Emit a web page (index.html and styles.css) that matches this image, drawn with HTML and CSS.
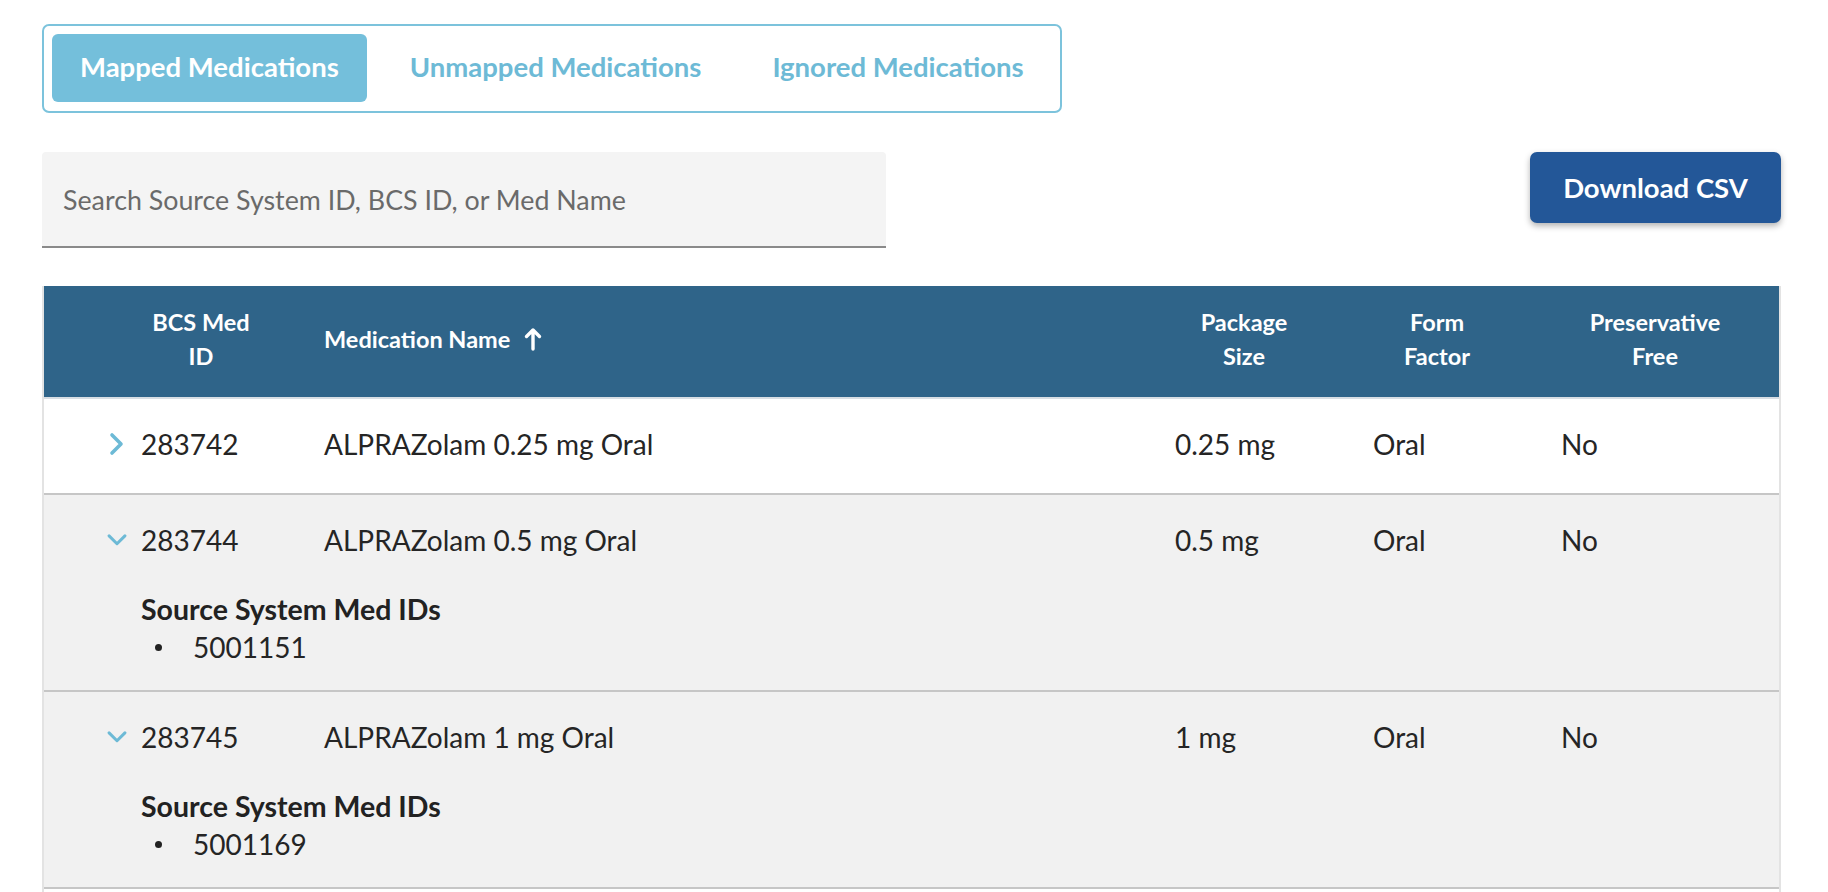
FILE: index.html
```html
<!DOCTYPE html>
<html lang="en">
<head>
<meta charset="utf-8">
<title>Mapped Medications</title>
<link rel="stylesheet" href="styles.css">
</head>
<body>
<div class="page">
  <nav class="tabs">
    <button class="tab active">Mapped Medications</button>
    <button class="tab">Unmapped Medications</button>
    <button class="tab">Ignored Medications</button>
  </nav>

  <div class="toolbar">
    <div class="search">Search Source System ID, BCS ID, or Med Name</div>
    <button class="download">Download CSV</button>
  </div>

  <div class="table">
    <div class="thead">
      <div class="th th-id">BCS Med<br>ID</div>
      <div class="th th-name">Medication Name
        <svg class="sort" width="18" height="24" viewBox="0 0 18 24"><path d="M9 22V3M2.5 9.5L9 3l6.5 6.5" fill="none" stroke="#fff" stroke-width="3.4" stroke-linecap="round" stroke-linejoin="round"/></svg>
      </div>
      <div class="th">Package<br>Size</div>
      <div class="th">Form<br>Factor</div>
      <div class="th">Preservative<br>Free</div>
    </div>

    <div class="row">
      <div class="td td-id"><span class="chev"><svg width="16" height="24" viewBox="0 0 16 24"><path d="M3 3l9 9-9 9" fill="none" stroke="#6dbad6" stroke-width="3.6" stroke-linecap="round" stroke-linejoin="round"/></svg></span>283742</div>
      <div class="td td-name">ALPRAZolam 0.25 mg Oral</div>
      <div class="td">0.25 mg</div>
      <div class="td">Oral</div>
      <div class="td">No</div>
    </div>

    <div class="row open">
      <div class="td td-id"><span class="chev"><svg width="24" height="16" viewBox="0 0 24 16"><path d="M2.5 3l9.5 9.5 9.5-9.5" fill="none" stroke="#6dbad6" stroke-width="3.6" stroke-linecap="round" stroke-linejoin="round"/></svg></span>283744</div>
      <div class="td td-name">ALPRAZolam 0.5 mg Oral</div>
      <div class="td">0.5 mg</div>
      <div class="td">Oral</div>
      <div class="td">No</div>
      <div class="details">
        <h4>Source System Med IDs</h4>
        <ul><li>5001151</li></ul>
      </div>
    </div>

    <div class="row open">
      <div class="td td-id"><span class="chev"><svg width="24" height="16" viewBox="0 0 24 16"><path d="M2.5 3l9.5 9.5 9.5-9.5" fill="none" stroke="#6dbad6" stroke-width="3.6" stroke-linecap="round" stroke-linejoin="round"/></svg></span>283745</div>
      <div class="td td-name">ALPRAZolam 1 mg Oral</div>
      <div class="td">1 mg</div>
      <div class="td">Oral</div>
      <div class="td">No</div>
      <div class="details">
        <h4>Source System Med IDs</h4>
        <ul><li>5001169</li></ul>
      </div>
    </div>

    <div class="row">
      <div class="td td-id"><span class="chev"><svg width="16" height="24" viewBox="0 0 16 24"><path d="M3 3l9 9-9 9" fill="none" stroke="#6dbad6" stroke-width="3.6" stroke-linecap="round" stroke-linejoin="round"/></svg></span>283746</div>
      <div class="td td-name">ALPRAZolam 2 mg Oral</div>
      <div class="td">2 mg</div>
      <div class="td">Oral</div>
      <div class="td">No</div>
    </div>
  </div>
</div>
</body>
</html>
```

FILE: styles.css
```css
* { box-sizing: border-box; }

html, body {
  margin: 0;
  padding: 0;
  background: #fff;
  overflow: hidden;
}

body {
  font-family: Lato, "Open Sans", "Liberation Sans", sans-serif;
  color: #252525;
}

.page {
  padding: 24px 47px 0 42px;
}

/* Tabs */
.tabs {
  display: inline-flex;
  gap: 15px;
  border: 2px solid #7cc3dc;
  border-radius: 7px;
  padding: 8px 8px 9px 8px;
}

.tab {
  height: 68px;
  padding: 0 28px 4px;
  border: 0;
  background: transparent;
  border-radius: 6px;
  font-family: inherit;
  font-size: 27.5px;
  font-weight: 700;
  color: #6dbad6;
  cursor: pointer;
}

.tab.active {
  background: #74bfdb;
  color: #fff;
}

/* Toolbar */
.toolbar {
  margin-top: 39px;
  display: flex;
  justify-content: space-between;
  align-items: flex-start;
}

.search {
  width: 844px;
  height: 96px;
  background: #f4f4f4;
  border-bottom: 2px solid #8a8a8a;
  border-radius: 4px 4px 0 0;
  padding: 2px 0 0 21px;
  display: flex;
  align-items: center;
  font-size: 26.8px;
  color: #6a6a6a;
}

.download {
  width: 251px;
  height: 71px;
  border: 0;
  border-radius: 7px;
  background: #235798;
  color: #fff;
  font-family: inherit;
  font-size: 27.5px;
  font-weight: 700;
  padding-bottom: 2px;
  box-shadow: 0 3px 6px rgba(0, 0, 0, 0.3);
}

/* Table */
.table {
  margin-top: 38px;
  border-left: 2px solid #e3e3e3;
  border-right: 2px solid #e3e3e3;
}

.thead,
.row {
  display: grid;
  grid-template-columns: 63px 188px 850px 198px 188px 1fr;
}

.thead {
  background: #2f6489;
  height: 113px;
  padding-bottom: 6px;
  border-bottom: 2px solid #d8dee4;
  align-items: center;
  color: #fff;
  font-size: 23.5px;
  font-weight: 700;
  line-height: 34px;
}

.th {
  text-align: center;
}

.th-id { grid-column: 2; }

.th-name {
  text-align: left;
  padding-left: 29px;
  display: flex;
  align-items: center;
  gap: 14px;
}

.sort { display: block; }

.row {
  border-bottom: 2px solid #c6c6c6;
  background: #fff;
  font-size: 28px;
  line-height: 32px;
}

.row.open {
  background: #f1f1f1;
}

.td {
  padding: 29px 0 33px 30px;
}

.td-id {
  grid-column: 2;
  padding-left: 0;
  display: flex;
  align-items: center;
}

.td-name { padding-left: 29px; }

.chev {
  width: 20px;
  margin-right: 14px;
  display: flex;
  justify-content: center;
  align-items: center;
}

.chev svg { display: block; }

.row.open .td {
  padding-bottom: 0;
}

.details {
  grid-column: 2 / -1;
  padding: 35px 0 25px 34px;
}

.details h4 {
  margin: 0;
  font-size: 28.5px;
  font-weight: 700;
  line-height: 36px;
  color: #222;
}

.details ul {
  margin: 2px 0 0;
  padding: 0;
  list-style: none;
}

.details li {
  display: flex;
  align-items: center;
  line-height: 36px;
}

.details li::before {
  content: "";
  width: 7px;
  height: 7px;
  border-radius: 50%;
  background: #222;
  margin: 0 31px 0 14px;
}
```
